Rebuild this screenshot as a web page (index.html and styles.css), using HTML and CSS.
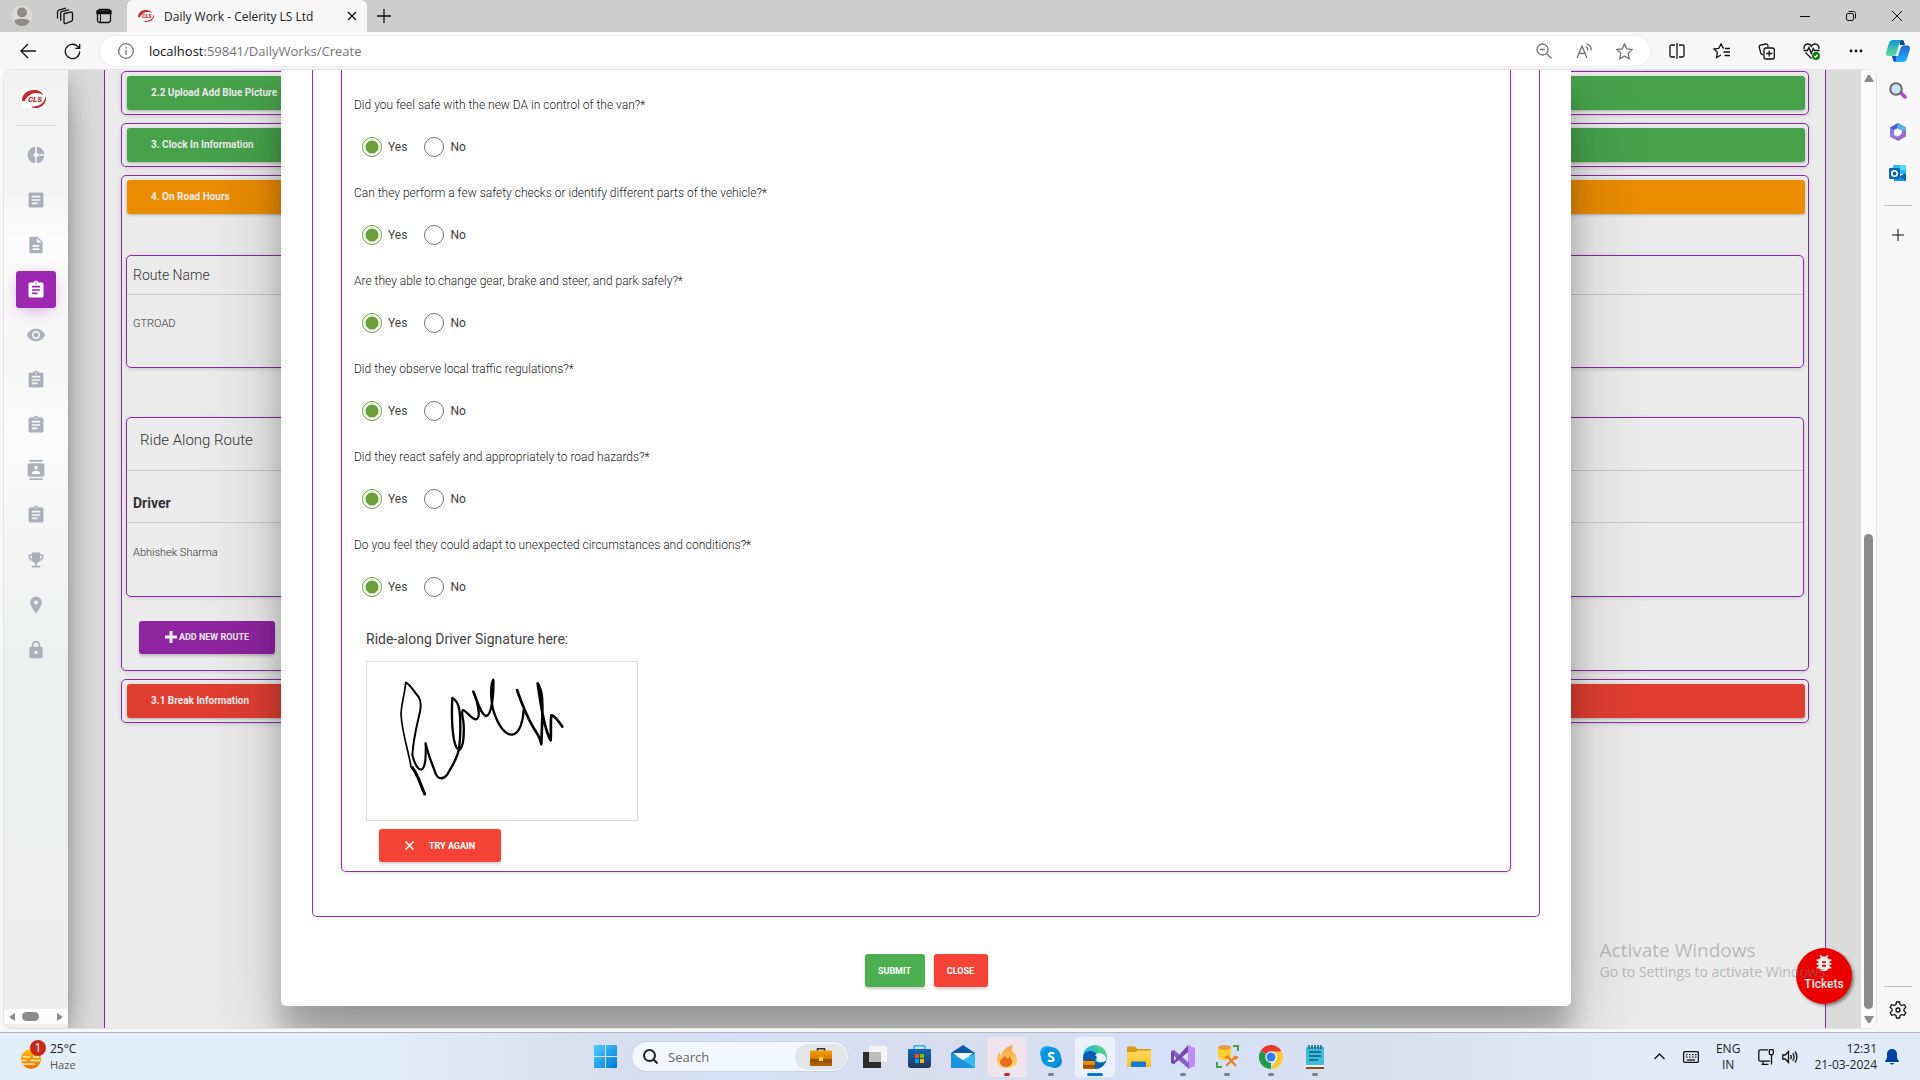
FILE: index.html
```html
<!DOCTYPE html>
<html lang="en">
<head>
<meta charset="utf-8">
<meta name="viewport" content="width=device-width, initial-scale=1">
<title>Daily Work - Celerity LS Ltd</title>
<link rel="stylesheet" href="styles.css">
</head>
<body>
<svg class="defs" aria-hidden="true">
  <defs>
    <linearGradient id="gBlue" x1="0" y1="0" x2="1" y2="1"><stop offset="0" stop-color="#4fd0ff"/><stop offset="1" stop-color="#0078d4"/></linearGradient>
    <linearGradient id="gEdge" x1="0" y1="1" x2="1" y2="0"><stop offset="0" stop-color="#0c7bd0"/><stop offset=".5" stop-color="#27b6e0"/><stop offset="1" stop-color="#6be04b"/></linearGradient>
    <linearGradient id="gCase" x1="0" y1="0" x2="0" y2="1"><stop offset="0" stop-color="#f59c0b"/><stop offset=".55" stop-color="#d67b00"/><stop offset=".56" stop-color="#8f4c00"/><stop offset="1" stop-color="#b86500"/></linearGradient>
    <linearGradient id="gFold" x1="0" y1="0" x2="0" y2="1"><stop offset="0" stop-color="#ffdc5c"/><stop offset="1" stop-color="#f9bf24"/></linearGradient>
    <linearGradient id="gStore" x1="0" y1="0" x2="0" y2="1"><stop offset="0" stop-color="#0f68b4"/><stop offset="1" stop-color="#243559"/></linearGradient>
    <linearGradient id="gFlame" x1="0" y1="0" x2="0" y2="1"><stop offset="0" stop-color="#f6a04a"/><stop offset="1" stop-color="#fbd85b"/></linearGradient>
    <linearGradient id="gSun" x1="0" y1="0" x2="0" y2="1"><stop offset="0" stop-color="#fdc000"/><stop offset="1" stop-color="#ee6c00"/></linearGradient>
    <linearGradient id="gCopA" x1="0" y1="0" x2="0" y2="1"><stop offset="0" stop-color="#1593d8"/><stop offset="1" stop-color="#5fe08f"/></linearGradient>
    <linearGradient id="gCopB" x1="0" y1="0" x2="0" y2="1"><stop offset="0" stop-color="#1f66d6"/><stop offset="1" stop-color="#20b4f5"/></linearGradient>
    <symbol id="clip" viewBox="0 0 24 24"><path d="M19 3h-4.180C14.400 1.840 13.300 1 12 1c-1.300 0-2.400.84-2.820 2H5c-1.100 0-2 .9-2 2v14c0 1.100.9 2 2 2h14c1.100 0 2-.9 2-2V5c0-1.100-.9-2-2-2zm-7 0c.55 0 1 .45 1 1s-.45 1-1 1-1-.45-1-1 .45-1 1-1zm2 14H7v-2h7v2zm3-4H7v-2h10v2zm0-4H7V7h10v2z"/></symbol>
    <symbol id="logo" viewBox="0 0 24 18"><path d="M0 11C0 4 5 0 12 0c5 0 8 2 9 5C18 3 12 2 8 5 4 8 3.500 9 3 11zM24 6c1 7-4 12-11 12-2 0-3-.5-3.500-1.500C15 17 21 14 22.500 10z" fill="#c62a2d"/><text x="6" y="12" font-family="Roboto, sans-serif" font-size="8" font-weight="900" font-style="italic" fill="#c62a2d">CLS</text></symbol>
  </defs>
</svg>

<header class="tabstrip">
  <div class="tabstrip-left">
    <svg class="avatar" width="22" height="22" viewBox="0 0 22 22"><circle cx="11" cy="11" r="10.500" fill="#dcdad7"/><circle cx="11" cy="7.500" r="5" fill="#8e8b87"/><path d="M3.500 17c0-3 3-3 7.500-3s7.500 0 7.500 3c-2 3-4.500 4-7.500 4s-5.500-1-7.500-4z" fill="#8e8b87"/></svg>
    <svg class="line" width="18" height="18" viewBox="0 0 18 18"><path d="M8.300 6.500l6.500-1.300c.9-.2 1.700.3 1.700 1.300v6.300c0 .7-.3 1.200-1 1.400l-5.800 2.300c-1 .3-1.700-.2-1.700-1.200V7.800c0-.7-.3-1.100.3-1.300zM4.700 13.800V6.200c0-1 .4-1.600 1.300-1.900l7-1.500M1.500 11.500V5c0-1 .4-1.600 1.300-1.900L10 1.200"/></svg>
    <svg class="line" width="16" height="16" viewBox="0 0 16 16"><rect x="1.500" y="1.500" width="13" height="13" rx="2.500"/><path d="M1 3h14v2.500H1z" fill="#111"/><path d="M4.500 5v9" stroke-width="1"/></svg>
  </div>
  <div class="tab">
    <svg width="16" height="12"><use href="#logo"/></svg>
    <span class="tab-title">Daily Work - Celerity LS Ltd</span>
    <button class="icon-btn" aria-label="Close tab"><svg class="line" width="10" height="10" viewBox="0 0 10 10"><path d="M1 1l8 8M9 1l-8 8"/></svg></button>
  </div>
  <button class="icon-btn new-tab" aria-label="New tab"><svg class="line" width="14" height="14" viewBox="0 0 14 14"><path d="M7 0v14M0 7h14"/></svg></button>
  <div class="win-btns">
    <button class="icon-btn" aria-label="Minimize"><svg class="line thin" width="10" height="10" viewBox="0 0 10 10"><path d="M0 5.500h10"/></svg></button>
    <button class="icon-btn" aria-label="Restore"><svg class="line thin" width="10" height="10" viewBox="0 0 10 10"><rect x=".5" y="2.500" width="7" height="7" rx="1.500"/><path d="M2.500.5h5c1.200 0 2 .8 2 2v5"/></svg></button>
    <button class="icon-btn" aria-label="Close window"><svg class="line thin" width="10" height="10" viewBox="0 0 10 10"><path d="M0 0l10 10M10 0L0 10"/></svg></button>
  </div>
</header>

<nav class="toolbar">
  <div class="nav-btns">
    <button class="icon-btn" aria-label="Back"><svg class="line" width="16" height="16" viewBox="0 0 16 16"><path d="M16 8H1M8 1L1 8l7 7"/></svg></button>
    <button class="icon-btn" aria-label="Refresh"><svg class="line" width="17" height="17" viewBox="0 0 17 17"><path d="M15.700 8.500a7.200 7.200 0 1 1-2.200-5.200L15.500 5.200M15.700 1v4.400h-4.400"/></svg></button>
  </div>
  <div class="address">
    <svg class="line gray" width="16" height="16" viewBox="0 0 16 16"><circle cx="8" cy="8" r="7.300"/><path d="M8 7v5M8 4v1.500"/></svg>
    <span class="url"><b>localhost</b>:59841/DailyWorks/Create</span>
    <div class="address-tools">
      <svg class="line gray" width="16" height="16" viewBox="0 0 16 16"><circle cx="6.500" cy="6.500" r="5.500"/><path d="M10.500 10.500l5 5M4 6.500h5"/></svg>
      <svg class="line gray" width="16" height="16" viewBox="0 0 16 16"><path d="M1 15L6 3l5 12M3 10.500h6M9.500 3.500c1.500.6 2.300 2 2.300 4M10.500.8c3 .8 4.800 3.200 4.800 6.500"/></svg>
      <svg class="line gray" width="17" height="17" viewBox="0 0 17 17"><path d="M8.500 1l2.300 4.900 5.200.7-3.800 3.700.9 5.400-4.600-2.600-4.600 2.600.9-5.400L1 6.600l5.200-.7z"/></svg>
    </div>
  </div>
  <div class="toolbar-tools">
    <svg class="line" width="16" height="16" viewBox="0 0 16 16"><path d="M8 0v16M6 2H2.500C1.500 2 1 2.500 1 3.500v9c0 1 .5 1.500 1.500 1.500H6M10 2h3.500c1 0 1.500.5 1.500 1.500v9c0 1-.5 1.500-1.500 1.500H10"/></svg>
    <svg class="line" width="17" height="16" viewBox="0 0 17 16"><path d="M11 5l-1-.1L8 1 5.700 5.300 1 6l3.400 3.400-.8 5.100L8 12M12 5.500h5M10.500 9h6.500M11.500 12.500H17"/></svg>
    <svg class="line" width="17" height="17" viewBox="0 0 17 17"><rect x="6" y="5" width="10.300" height="11" rx="2"/><path d="M11.200 7.500v6M8.200 10.500h6M5 11.500c-1.300.2-2-.3-2.200-1.300L1.300 4.500C1 3.300 1.500 2.500 2.600 2.200L7.500 1c1.200-.3 2 .1 2.300 1.200L10.200 4"/></svg>
    <svg class="line" width="17" height="17" viewBox="0 0 17 17"><path d="M.5 7.500h4l1.500-3 2.200 6 2-5 1.200 2h5M1.200 6C.5 3 2.500 1 4.500 1 6.500 1 8 2.500 8.300 3.300 8.700 2.500 10 1 12 1c2.500 0 4.500 2 3.800 5M2.500 9.500l6 6"/><circle cx="13" cy="13" r="4" fill="#107c10" stroke="none"/><path d="M11.300 13l1.200 1.200 2.200-2.400" stroke="#fff"/></svg>
    <svg width="16" height="16" viewBox="0 0 16 16" fill="#111"><circle cx="3" cy="8" r="1.400"/><circle cx="8" cy="8" r="1.400"/><circle cx="13" cy="8" r="1.400"/></svg>
  </div>
  <button class="icon-btn copilot" aria-label="Copilot"><svg width="24" height="23" viewBox="0 0 24 23"><path d="M13 0h3c2 0 2 1.500 3 5h-5z" fill="#0c4a80"/><path d="M7 0h8.500c-1 1-2 3-3.500 8.500S9.500 16 7 16H2.500C.5 16-.5 14 .3 11.500l2.500-8C3.500 1 5 0 7 0z" fill="url(#gCopA)"/><path d="M17 22H8.500c1-1 2-2.500 3.500-8s2.500-8.500 5-8.500h4.500c2 0 3 2 2.200 4.500l-2.500 8C20.500 21 19 22 17 22z" fill="url(#gCopB)"/><path d="M9 22c-1.500 0-2-2-3-6h2c2 0 3-2 4-4-1.500 6-2 9-3 10z" fill="#1647d8"/><path d="M13.500 6h3c-2 1-3 5-4.500 10H9c2-1 3-5 4.500-10z" fill="#f7f7f7"/></svg></button>
</nav>

<div class="workspace">
  <div class="viewport">
    <aside class="side">
      <a class="side-logo" href="#" aria-label="CLS"><svg width="24" height="18"><use href="#logo"/></svg></a>
      <nav class="side-nav">
        <a href="#" aria-label="Dashboard"><svg viewBox="0 0 24 24"><path d="M11 9.160V2c-5 .5-9 4.790-9 10s4 9.500 9 10v-7.160c-1-.41-2-1.520-2-2.840s1-2.430 2-2.840zM14.860 11H22c-.48-4.750-4-8.530-9-9v7.160c1 .3 1.520.98 1.860 1.840zM13 14.840V22c5-.47 8.520-4.250 9-9h-7.140c-.34.86-.86 1.540-1.860 1.840z"/></svg></a>
        <a href="#" aria-label="Articles"><svg viewBox="0 0 24 24"><path d="M19 3H5c-1.100 0-2 .9-2 2v14c0 1.100.9 2 2 2h14c1.100 0 2-.9 2-2V5c0-1.100-.9-2-2-2zm-5 14H7v-2h7v2zm3-4H7v-2h10v2zm0-4H7V7h10v2z"/></svg></a>
        <a href="#" aria-label="Documents"><svg viewBox="0 0 24 24"><path d="M14 2H6c-1.100 0-2 .9-2 2v16c0 1.100.9 2 2 2h12c1.100 0 2-.9 2-2V8l-6-6zm2 16H8v-2h8v2zm0-4H8v-2h8v2zm-3-5V3.500L18.500 9H13z"/></svg></a>
        <a href="#" class="active" aria-label="Daily work"><svg><use href="#clip"/></svg></a>
        <a href="#" aria-label="View"><svg viewBox="0 0 24 24"><path d="M12 4.500C7 4.500 2.730 7.610 1 12c1.730 4.390 6 7.500 11 7.500s9.270-3.110 11-7.500c-1.730-4.390-6-7.500-11-7.500zM12 17c-2.760 0-5-2.240-5-5s2.240-5 5-5 5 2.240 5 5-2.240 5-5 5zm0-8c-1.660 0-3 1.340-3 3s1.340 3 3 3 3-1.340 3-3-1.340-3-3-3z"/></svg></a>
        <a href="#" aria-label="Tasks"><svg><use href="#clip"/></svg></a>
        <a href="#" aria-label="Reports"><svg><use href="#clip"/></svg></a>
        <a href="#" aria-label="Contacts"><svg viewBox="0 0 24 24"><path d="M20 0H4v2h16V0zM4 24h16v-2H4v2zM20 4H4c-1.100 0-2 .9-2 2v12c0 1.100.9 2 2 2h16c1.100 0 2-.9 2-2V6c0-1.100-.9-2-2-2zm-8 2.750c1.240 0 2.250 1.010 2.250 2.250s-1.010 2.250-2.250 2.250S9.750 10.240 9.750 9 10.760 6.750 12 6.750zM17 17H7v-1.500c0-1.670 3.330-2.500 5-2.500s5 .83 5 2.500V17z"/></svg></a>
        <a href="#" aria-label="Assignments"><svg><use href="#clip"/></svg></a>
        <a href="#" aria-label="Awards"><svg viewBox="0 0 24 24"><path d="M19 5h-2V3H7v2H5c-1.100 0-2 .9-2 2v1c0 2.550 1.920 4.630 4.390 4.940.63 1.500 1.980 2.630 3.610 2.960V19H7v2h10v-2h-4v-3.100c1.630-.33 2.980-1.460 3.610-2.960C19.080 12.630 21 10.550 21 8V7c0-1.100-.9-2-2-2zM5 8V7h2v3.820C5.840 10.400 5 9.300 5 8zm14 0c0 1.300-.84 2.400-2 2.820V7h2v1z"/></svg></a>
        <a href="#" aria-label="Places"><svg viewBox="0 0 24 24"><path d="M12 2C8.130 2 5 5.130 5 9c0 5.250 7 13 7 13s7-7.750 7-13c0-3.870-3.130-7-7-7zm0 9.500c-1.380 0-2.500-1.120-2.500-2.500s1.120-2.500 2.500-2.500 2.500 1.120 2.500 2.500-1.120 2.500-2.500 2.500z"/></svg></a>
        <a href="#" aria-label="Security"><svg viewBox="0 0 24 24"><path d="M18 8h-1V6c0-2.760-2.240-5-5-5S7 3.240 7 6v2H6c-1.100 0-2 .9-2 2v10c0 1.100.9 2 2 2h12c1.100 0 2-.9 2-2V10c0-1.100-.9-2-2-2zm-6 9c-1.100 0-2-.9-2-2s.9-2 2-2 2 .9 2 2-.9 2-2 2zm3.100-9H8.900V6c0-1.710 1.390-3.100 3.100-3.100s3.100 1.390 3.100 3.100v2z"/></svg></a>
      </nav>
      <div class="hscroll">
        <svg width="6" height="8" viewBox="0 0 6 8"><path d="M6 0v8L0 4z"/></svg>
        <span class="hthumb"></span>
        <svg width="6" height="8" viewBox="0 0 6 8"><path d="M0 0v8l6-4z"/></svg>
      </div>
    </aside>

    <main class="page">
      <div class="outer-card">
        <section class="panel"><h2 class="bar green">2.2 Upload Add Blue Picture</h2></section>
        <section class="panel"><h2 class="bar green">3. Clock In Information</h2></section>
        <section class="panel">
          <h2 class="bar orange">4. On Road Hours</h2>
          <div class="table-card first">
            <table>
              <thead><tr><th>Route Name</th></tr></thead>
              <tbody><tr><td>GTROAD</td></tr></tbody>
            </table>
          </div>
          <div class="table-card second">
            <table>
              <caption>Ride Along Route</caption>
              <thead><tr><th class="strong">Driver</th></tr></thead>
              <tbody><tr><td>Abhishek Sharma</td></tr></tbody>
            </table>
          </div>
          <button class="btn purple"><svg width="12" height="12" viewBox="0 0 12 12"><path d="M4.500 0h3v4.500H12v3H7.500V12h-3V7.500H0v-3h4.500z"/></svg>ADD NEW ROUTE</button>
        </section>
        <section class="panel"><h2 class="bar red">3.1 Break Information</h2></section>
      </div>

      <div class="modal-layer">
        <form class="modal" role="dialog" aria-label="Ride along">
          <div class="modal-outer">
            <div class="modal-inner">
              <fieldset class="question"><legend>Did you feel safe with the new DA in control of the van?*</legend>
                <div class="choices"><label><input type="radio" name="q1" checked>Yes</label><label><input type="radio" name="q1">No</label></div></fieldset>
              <fieldset class="question"><legend>Can they perform a few safety checks or identify different parts of the vehicle?*</legend>
                <div class="choices"><label><input type="radio" name="q2" checked>Yes</label><label><input type="radio" name="q2">No</label></div></fieldset>
              <fieldset class="question"><legend>Are they able to change gear, brake and steer, and park safely?*</legend>
                <div class="choices"><label><input type="radio" name="q3" checked>Yes</label><label><input type="radio" name="q3">No</label></div></fieldset>
              <fieldset class="question"><legend>Did they observe local traffic regulations?*</legend>
                <div class="choices"><label><input type="radio" name="q4" checked>Yes</label><label><input type="radio" name="q4">No</label></div></fieldset>
              <fieldset class="question"><legend>Did they react safely and appropriately to road hazards?*</legend>
                <div class="choices"><label><input type="radio" name="q5" checked>Yes</label><label><input type="radio" name="q5">No</label></div></fieldset>
              <fieldset class="question"><legend>Do you feel they could adapt to unexpected circumstances and conditions?*</legend>
                <div class="choices"><label><input type="radio" name="q6" checked>Yes</label><label><input type="radio" name="q6">No</label></div></fieldset>
              <div class="signature">
                <p>Ride-along Driver Signature here:</p>
                <svg class="pad" viewBox="81 306 810 474" role="img" aria-label="Signature">
                  <path stroke-width="5" d="M213 620C205 570 186 520 183 462C185 425 195 400 197 368"/>
                  <path stroke-width="6" d="M198 368C208 370 215 385 236 411C242 420 243 440 240 455C232 490 220 535 217 585C222 605 232 628 243 629C260 625 257 580 257 550"/>
                  <path stroke-width="7" d="M257 551C266 590 280 620 287 641C295 660 312 658 322 643C340 612 352 595 356 570C363 530 362 470 357 445C353 425 345 418 337 414C335 450 335 500 342 540C346 560 354 572 358 570C372 560 372 520 371 495C370 475 362 455 369 450C382 455 396 479 408 478C425 475 412 420 400 395"/>
                  <path stroke-width="7" d="M400 395C415 430 423 465 439 468C455 465 462 400 460 359C450 375 452 430 463 460C475 495 495 526 517 524C540 520 550 480 551 450"/>
                  <path stroke-width="8" d="M531 390C545 430 560 470 580 502C590 520 600 530 604 553C605 500 612 430 603 395C600 380 596 375 593 370C600 420 608 475 621 515C625 525 627 535 632 541C634 510 631 485 634 466C645 465 655 485 667 500"/>
                  <path stroke-width="9" d="M216 622C232 640 238 665 254 702"/>
                </svg>
                <button type="button" class="btn danger try"><svg class="x" width="9" height="9" viewBox="0 0 9 9"><path d="M.5.5l8 8M8.500.5l-8 8"/></svg>TRY AGAIN</button>
              </div>
            </div>
          </div>
          <div class="modal-actions">
            <button type="button" class="btn success">SUBMIT</button>
            <button type="button" class="btn danger">CLOSE</button>
          </div>
        </form>
      </div>

      <a class="tickets" href="#"><svg width="22" height="22" viewBox="0 0 24 24"><path d="M20 8h-2.810c-.45-.78-1.070-1.450-1.820-1.960L17 4.410 15.590 3l-2.170 2.170C12.960 5.060 12.490 5 12 5c-.49 0-.96.06-1.410.17L8.410 3 7 4.410l1.620 1.630C7.880 6.550 7.260 7.220 6.810 8H4v2h2.090c-.05.33-.09.66-.09 1v1H4v2h2v1c0 .34.04.67.09 1H4v2h2.810c1.040 1.790 2.970 3 5.190 3s4.150-1.210 5.190-3H20v-2h-2.090c.05-.33.09-.66.09-1v-1h2v-2h-2v-1c0-.34-.04-.67-.09-1H20V8zm-6 8h-4v-2h4v2zm0-4h-4v-2h4v2z"/></svg>Tickets</a>
      <div class="watermark"><p class="wm-title">Activate Windows</p><p class="wm-text">Go to Settings to activate Windows.</p></div>
    </main>

    <div class="vscroll">
      <svg width="10" height="7" viewBox="0 0 10 7"><path d="M0 7L4 0h2l4 7z"/></svg>
      <div class="vtrack"><span class="vthumb"></span></div>
      <svg width="10" height="7" viewBox="0 0 10 7"><path d="M0 0h10L6 7H4z"/></svg>
    </div>
  </div>

  <aside class="edge-side">
    <svg width="18" height="18" viewBox="0 0 18 18"><path d="M12 11l4 4" stroke="#c23be0" stroke-width="3.500" stroke-linecap="round"/><circle cx="7" cy="7" r="5.800" fill="#c5e6f8" stroke="#666" stroke-width="2"/></svg>
    <svg width="18" height="18" viewBox="0 0 18 18"><path d="M9 0l8 4.500v4L12 7 9 5 5 7v5L1 14V4.500z" fill="#4a5fd0"/><path d="M9 0l8 4.500V10l-5-3-4-2z" fill="#52b3ea"/><path d="M17 8v5.500L9 18l-5-3 6-2 3-3V7z" fill="#9a6ac8"/><path d="M1 4.500L5 7v5l4 2-4 2-4-2.500z" fill="#8b7bdc"/><circle cx="9" cy="9.500" r="3" fill="#fff"/></svg>
    <svg width="18" height="18" viewBox="0 0 18 18"><path d="M4 1h13v9H4z" fill="#35b8f1"/><path d="M11 1h6v5h-6z" fill="#50d9ff"/><path d="M5 9l7 3 5-3v8H5z" fill="#1590df"/><path d="M17 9v8l-6-5z" fill="#0f5fae"/><rect y="4" width="11" height="11" rx="1" fill="#0a64b8"/><circle cx="5.500" cy="9.500" r="2.700" fill="none" stroke="#fff" stroke-width="1.600"/></svg>
    <hr>
    <svg class="line thin" width="12" height="12" viewBox="0 0 12 12"><path d="M6 0v12M0 6h12"/></svg>
    <hr class="push">
    <svg class="line" width="18" height="18" viewBox="0 0 18 18"><circle cx="9" cy="9" r="2"/><path d="M7.500 1h3l.6 2.500 1.700 1 2.500-.8 1.500 2.600L15 8.100v1.800l1.800 1.800-1.500 2.600-2.500-.8-1.700 1-.6 2.500h-3l-.6-2.500-1.700-1-2.500.8-1.500-2.600L3 9.900V8.100L1.200 6.300l1.500-2.600 2.500.8 1.700-1z" stroke-linejoin="round"/></svg>
  </aside>
</div>

<footer class="taskbar">
  <div class="weather">
    <span class="sun"><svg width="22" height="20" viewBox="0 0 22 20"><circle cx="12" cy="10" r="10" fill="url(#gSun)"/><path d="M4 8h7M14 8h6M0 11.500h8M11 11.500h10M2 15h14" stroke="#ffe9b8" stroke-width="1.500"/></svg><span class="badge">1</span></span>
    <span class="weather-text">25°C<small>Haze</small></span>
  </div>
  <div class="apps">
    <button class="app" aria-label="Start"><svg width="23" height="23" viewBox="0 0 23 23" fill="url(#gBlue)"><path d="M0 1c0-.6.400-1 1-1h10v11H0zM12 0h10c.6 0 1 .4 1 1v10H12zM0 12h11v11H1c-.6 0-1-.4-1-1zM12 12h11v10c0 .6-.4 1-1 1H12z"/></svg></button>
    <div class="search">
      <svg width="15" height="15" viewBox="0 0 15 15" fill="none" stroke="#222" stroke-width="2"><circle cx="6.500" cy="6.500" r="5.500"/><path d="M10.500 10.500l4 4"/></svg>
      <input type="text" placeholder="Search" aria-label="Search">
      <span class="case"><svg width="22" height="18" viewBox="0 0 22 18"><path d="M7.500 3V1.500c0-.6.4-1 1-1h5c.6 0 1 .4 1 1V3" fill="none" stroke="#333" stroke-width="1.800"/><rect y="2.500" width="22" height="15.500" rx="1" fill="url(#gCase)"/><rect x="9" y="9" width="4" height="4" fill="#ffd92e"/></svg></span>
    </div>
    <button class="app" aria-label="Task view"><svg width="24" height="22" viewBox="0 0 24 22"><rect y="6" width="18" height="16" fill="#2b2b2b"/><rect x="6" width="18" height="16" fill="#f4f4f4"/><rect x="6" y="6" width="12" height="10" fill="#bdbdbd"/></svg></button>
    <button class="app" aria-label="Store"><svg width="23" height="23" viewBox="0 0 23 23"><path d="M6 5V2c0-.8.5-1.300 1.300-1.300h8.400c.8 0 1.300.5 1.300 1.300v3" fill="none" stroke="#23b4f2" stroke-width="1.600"/><path d="M0 4h23v16c0 2-1 3-3 3H3c-2 0-3-1-3-3z" fill="url(#gStore)"/><path d="M7 9h4v4H7z" fill="#f25022"/><path d="M12 9h4v4h-4z" fill="#7fba00"/><path d="M7 14h4v4H7z" fill="#00a4ef"/><path d="M12 14h4v4h-4z" fill="#ffb900"/></svg></button>
    <button class="app" aria-label="Mail"><svg width="24" height="23" viewBox="0 0 24 23"><path d="M0 8l12-8 12 8v3H0z" fill="#0a5aa8"/><path d="M2 8h20l-10 8z" fill="#f3f6fa"/><path d="M0 8l12 7 12-7v15H0z" fill="#35b9f1"/><path d="M0 8l24 15H0z" fill="#1b93e0"/></svg></button>
    <button class="app alert" aria-label="Torch"><svg width="20" height="24" viewBox="0 0 20 24"><path d="M16 0c-2 4-1 6 1 8 2 2 3 4 3 7 0 5-4 8-10 8S0 20 0 14c0-3 1-5 3-7 0 2 0 3 1 4C5 6 10 1 16 0z" fill="url(#gFlame)"/><path d="M8 10c0 2 2 3 3 4 1-1 1-2 1-3 2 2 3 4 3 6 0 3-3 5-6 5s-6-2-6-5c0-3 4-4 5-7z" fill="#e96a1c"/></svg></button>
    <button class="app run" aria-label="Skype"><svg width="22" height="22" viewBox="0 0 22 22"><circle cx="7" cy="7" r="7" fill="#1aa5e8"/><circle cx="15" cy="15" r="7" fill="#0d86d6"/><circle cx="11" cy="11" r="10" fill="#0a97e0"/><text x="11" y="16" text-anchor="middle" font-family="Open Sans, sans-serif" font-size="14" font-weight="700" fill="#fff">S</text></svg></button>
    <button class="app current" aria-label="Edge"><svg width="24" height="24" viewBox="0 0 24 24"><circle cx="12" cy="12" r="12" fill="url(#gEdge)"/><path d="M0 13C1 6 7 5 11 7c4 2 3 6 1 8 2 4 8 3 11 1-2 5-6 8-11 8S0 20 0 13z" fill="#0d5cae"/><path d="M12 11c2 0 3 2 1 4 2 3 7 3 10 0 1-3-2-6-6-7-3 0-4 1-5 3z" fill="#edf3fa"/><rect y="16" width="12" height="8" rx="1" fill="url(#gCase)"/><path d="M4 16v-1h4v1" fill="none" stroke="#5a3500"/></svg></button>
    <button class="app" aria-label="Files"><svg width="24" height="22" viewBox="0 0 24 22"><path d="M0 2c0-1 .5-1.500 1.500-1.500H8l2 2.500h13c.6 0 1 .4 1 1v6H0z" fill="#d89a10"/><path d="M0 6h9l2-1.500h13V21H0z" fill="url(#gFold)"/><path d="M4 21v-4c0-1 .5-1.500 1.500-1.500h12c1 0 1.500.5 1.500 1.500v4z" fill="#1a79cf"/></svg></button>
    <button class="app run" aria-label="Visual Studio"><svg width="24" height="24" viewBox="0 0 24 24"><path d="M17 0l7 3v18l-7 3z" fill="#c08cf5"/><path d="M0 6l3-1 15 13v6L3 11v8l-3-1z" fill="#8a5bc8"/><path d="M0 18V6l3 2v8l14-16v7L3 19z" fill="#7348ae"/></svg></button>
    <button class="app run" aria-label="SQL Server"><svg width="23" height="23" viewBox="0 0 23 23"><path d="M2 2h13v10c0 2-2 3-6 3s-7-1-7-3z" fill="#fbd02e"/><ellipse cx="8.500" cy="2.500" rx="6.500" ry="2.500" fill="#eb9a45"/><path d="M17 1h5v5M1 17v5h5" fill="none" stroke="#3fa34a" stroke-width="2"/><path d="M11 11l9 10M20 11l-10 10M9 13l4-2M18 14l4-2" stroke="#ee7a1c" stroke-width="2"/></svg></button>
    <button class="app run" aria-label="Chrome"><svg width="24" height="24" viewBox="0 0 24 24"><path d="M12 12L1.600 6A12 12 0 0 1 22.400 6z" fill="#e33b2e"/><path d="M12 12v12A12 12 0 0 1 1.600 6z" fill="#1e9b4b"/><path d="M12 6.500h10.600c1 2 1.400 3.500 1.400 5.500a12 12 0 0 1-12 12l5-9z" fill="#fcc934"/><circle cx="12" cy="12" r="5.700" fill="#fff"/><circle cx="12" cy="12" r="4.500" fill="#2d7df0"/></svg></button>
    <button class="app run" aria-label="Notepad"><svg width="18" height="24" viewBox="0 0 18 24"><path d="M0 2h18v20H0z" fill="#41bcd8"/><path d="M0 20h18v2H0z" fill="#f1f1f1"/><path d="M0 22h18v2H0z" fill="#8a4a1c"/><path d="M3 7h12M3 11h12M3 15h9" stroke="#0b5c78" stroke-width="1.600"/><path d="M3 0v4M6 0v4M9 0v4M12 0v4M15 0v4" stroke="#0b5c78" stroke-width="1.500"/></svg></button>
  </div>
  <div class="tray">
    <svg class="line chev" width="11" height="7" viewBox="0 0 11 7"><path d="M.5 6l5-5 5 5"/></svg>
    <svg class="line kb" width="16" height="12" viewBox="0 0 16 12"><rect x=".6" y=".6" width="14.800" height="10.800" rx="1.500"/><path d="M3 3.700h10.500M3 6.200h10.500" stroke-dasharray="1.500 1.500"/><path d="M4 9h8"/></svg>
    <span class="lang">ENG<br>IN</span>
    <svg class="line" width="16" height="16" viewBox="0 0 16 16"><path d="M10 .8H2.500c-1 0-1.700.6-1.700 1.700v8c0 1 .6 1.700 1.700 1.700h9.500M5 12v3.200M3.500 15.300h7M13.500 6v9.500"/><rect x="11.300" y=".6" width="4" height="5" rx="1"/></svg>
    <svg class="line" width="16" height="14" viewBox="0 0 16 14"><path d="M.8 5h2.400L6.500 1.500v11L3.200 9H.8zM8.500 5c.8 1 .8 3 0 4M10.700 3.300c1.800 2 1.800 5.400 0 7.400M13 1.500c2.500 3 2.500 8 0 11"/></svg>
    <span class="clock">12:31<br>21-03-2024</span>
    <svg width="14" height="16" viewBox="0 0 14 16" fill="#00439c"><path d="M7 0c3 0 5 2.200 5 5v4l2 3.500v.5H0v-.5L2 9V5c0-2.800 2-5 5-5zM5 14h4c-.3 1-1 1.500-2 1.500S5.300 15 5 14z"/></svg>
  </div>
</footer>
</body>
</html>
```
FILE: styles.css
```css
* { box-sizing: border-box; }

body {
  margin: 0;
  height: 100vh;
  display: flex;
  flex-direction: column;
  overflow: hidden;
  background: #f7f7f7;
  color: #333;
  font-family: Roboto, sans-serif;
  font-size: 12px;
}

p, h2 { margin: 0; }
a { color: inherit; text-decoration: none; }
svg { display: block; flex: none; }
button { font-family: inherit; cursor: pointer; }
.defs { position: absolute; width: 0; height: 0; }

.line { fill: none; stroke: #111; stroke-width: 1.3; }
.thin { stroke-width: 1; }
.gray { stroke: #757575; }

.icon-btn {
  display: flex;
  align-items: center;
  justify-content: center;
  padding: 0;
  border: 0;
  background: none;
}

/* Browser tab strip */
.tabstrip {
  display: flex;
  align-items: center;
  height: 32px;
  flex: none;
  background: #cdcdcd;
  font-family: "Open Sans", "Noto Sans", sans-serif;
}
.tabstrip-left {
  display: flex;
  align-items: center;
  justify-content: space-between;
  width: 127px;
  padding: 0 15px 0 11px;
}
.tab {
  display: flex;
  align-items: center;
  gap: 10px;
  width: 240px;
  height: 32px;
  padding: 0 10px 0 11px;
  border-radius: 6px 6px 0 0;
  background: #f7f7f7;
}
.tab-title { flex: 1; color: #222; white-space: nowrap; }
.new-tab { width: 34px; }
.win-btns { display: flex; margin-left: auto; }
.win-btns .icon-btn { width: 46px; height: 32px; }

/* Browser toolbar */
.toolbar {
  display: flex;
  align-items: center;
  height: 38px;
  flex: none;
  background: #f7f7f7;
}
.nav-btns { display: flex; width: 100px; padding-left: 6px; }
.nav-btns .icon-btn { width: 44px; height: 32px; }
.address {
  flex: 1;
  display: flex;
  align-items: center;
  gap: 15px;
  height: 30px;
  padding: 0 17px 0 18px;
  border-radius: 15px;
  background: #fff;
  box-shadow: 0 0 2px rgba(0, 0, 0, .12);
  font-family: "Open Sans", "Noto Sans", sans-serif;
  font-size: 13px;
}
.url { flex: 1; color: #757575; }
.url b { color: #111; font-weight: 400; }
.address-tools { display: flex; align-items: center; gap: 24px; }
.toolbar-tools { display: flex; align-items: center; gap: 28px; padding: 0 12px 0 19px; }
.copilot { width: 44px; height: 32px; }

/* Area below the toolbar */
.workspace { flex: 1; display: flex; min-height: 0; padding-bottom: 4px; }
.viewport {
  flex: 1;
  display: flex;
  min-width: 0;
  margin-left: 4px;
  border-radius: 8px;
  overflow: hidden;
  box-shadow: 0 0 0 1px #e2e2e2;
}

/* Application side navigation */
.side {
  position: relative;
  z-index: 2;
  display: flex;
  flex-direction: column;
  align-items: center;
  width: 64px;
  flex: none;
  padding: 20px 0 4px;
  background: linear-gradient(#f2f2f2, #f4f4f4 12%, #fcfcfc 18%, #f6f6f6 30%, #fbfbfb 38%, #f4f4f4 50%, #eef0ef 62%, #eee 100%);
  box-shadow: 0 16px 38px -12px rgba(0, 0, 0, .56), 0 4px 25px 0 rgba(0, 0, 0, .12), 0 8px 10px -5px rgba(0, 0, 0, .2);
}
.side-logo {
  width: 40px;
  height: 36px;
  padding: 0 10px 0 6px;
  border-bottom: 1px solid #dcdcdc;
}
.side-logo svg { background: #fff; }
.side-nav { display: flex; flex-direction: column; gap: 8px; margin-top: 10px; }
.side-nav a {
  display: flex;
  align-items: center;
  justify-content: center;
  width: 40px;
  height: 37px;
  border-radius: 3px;
}
.side-nav svg { width: 20px; height: 20px; fill: #a9afbb; }
.side-nav .active {
  background: #9c27b0;
  box-shadow: 0 4px 16px -4px rgba(156, 39, 176, .5);
}
.side-nav .active svg { fill: #fff; }
.hscroll {
  display: flex;
  align-items: center;
  gap: 7px;
  width: 64px;
  height: 15px;
  margin-top: auto;
  padding: 0 5px;
  background: #fcfcfc;
  fill: #8b8b8b;
}
.hthumb { width: 17px; height: 9px; margin-right: auto; border-radius: 5px; background: #8b8b8b; }

/* Page behind the dialog */
.page {
  position: relative;
  flex: 1;
  min-width: 0;
  padding: 0 35px 0 36px;
  background: #dadada;
  overflow: hidden;
}
.outer-card {
  display: flex;
  flex-direction: column;
  gap: 8px;
  height: 100%;
  padding: 1px 16px;
  border: solid #8e24aa;
  border-width: 0 1px;
  background: #ebebeb;
}
.panel {
  padding: 4px 3px 4px 5px;
  border: 1px solid #8e24aa;
  border-radius: 5px;
  box-shadow: 0 1px 4px rgba(0, 0, 0, .14);
}
.bar {
  height: 34px;
  padding-left: 24px;
  border-radius: 3px;
  color: #ebebeb;
  font-size: 10px;
  font-weight: 700;
  line-height: 34px;
  box-shadow: 0 1px 3px rgba(0, 0, 0, .25);
}
.green { background: #47a14b; }
.orange { background: #eb8c00; }
.red { background: #e03e31; }

.table-card {
  margin: 0 1px 0 -1px;
  border: 1px solid #8e24aa;
  border-radius: 5px;
  box-shadow: 0 1px 4px rgba(0, 0, 0, .14);
}
.first { margin-top: 41px; }
.second { margin-top: 49px; }
table { width: 100%; border-collapse: collapse; text-align: left; }
caption {
  height: 52px;
  padding: 9px 13px;
  font-size: 15px;
  font-weight: 300;
  line-height: 26px;
  text-align: left;
}
th {
  height: 38px;
  padding: 0 6px;
  border-bottom: 1px solid #c8c8c8;
  font-size: 14px;
  font-weight: 300;
}
th.strong {
  height: 52px;
  padding-top: 12px;
  border-top: 1px solid #c8c8c8;
  font-weight: 700;
}
td { height: 73px; padding: 0 6px 14px; font-size: 11px; font-weight: 300; }

.btn {
  display: flex;
  align-items: center;
  justify-content: center;
  height: 33px;
  padding: 0 12px;
  border: 0;
  border-radius: 3px;
  color: #fff;
  font-size: 9px;
  font-weight: 700;
  white-space: nowrap;
  box-shadow: 0 2px 3px rgba(0, 0, 0, .2);
}
.btn svg { fill: currentColor; }
.purple { gap: 2px; width: 136px; margin: 24px 0 12px 12px; background: #8e24a0; color: #ebebeb; }
.success { width: 60px; background: #4caf50; }
.danger { width: 54px; background: #f44336; }

/* Dialog */
.modal-layer {
  position: absolute;
  inset: 0;
  padding: 0 290px 0 213px;
}
.modal {
  padding: 0 31px 19px;
  border-radius: 0 0 5px 5px;
  background: #fff;
  box-shadow: 0 27px 24px 0 rgba(0, 0, 0, .2), 0 40px 77px 0 rgba(0, 0, 0, .22);
}
.modal-outer {
  padding: 0 28px 44px;
  border: 1px solid #9c27b0;
  border-top: 0;
  border-radius: 0 0 5px 5px;
}
.modal-inner {
  padding: 27px 12px 9px;
  border: 1px solid #9c27b0;
  border-top: 0;
  border-radius: 0 0 5px 5px;
  box-shadow: 0 1px 4px rgba(0, 0, 0, .14);
}
.question { height: 88px; margin: 0; padding: 0; border: 0; }
.question legend { padding: 0; color: #222; font-size: 12px; font-weight: 300; line-height: 16px; }
.choices { display: flex; gap: 17px; padding: 24px 8px 0; }
.choices label { display: flex; align-items: center; gap: 6px; height: 20px; color: #444; }
.choices input {
  appearance: none;
  width: 20px;
  height: 20px;
  margin: 0;
  border: 1px solid #757575;
  border-radius: 50%;
}
.choices input:checked {
  border-color: #689f38;
  background: radial-gradient(circle, #689f38 6px, transparent 7px);
}
.signature { padding: 4px 12px 0; }
.signature p { padding-bottom: 12px; color: #444; font-size: 14px; line-height: 20px; }
.pad {
  width: 272px;
  height: 160px;
  border: 1px solid #ddd;
  fill: none;
  stroke: #000;
  stroke-linecap: round;
  stroke-linejoin: round;
}
.try { gap: 15px; width: 122px; margin: 8px 0 0 13px; }
.try .x { fill: none; stroke: #fff; stroke-width: 1.5; }
.modal-actions { display: flex; justify-content: center; gap: 9px; padding-top: 37px; }

.tickets {
  position: absolute;
  right: 9px;
  bottom: 24px;
  display: flex;
  flex-direction: column;
  align-items: center;
  width: 56px;
  height: 56px;
  padding-top: 4px;
  border-radius: 50%;
  background: #eb0000;
  box-shadow: 2px 2px 3px rgba(0, 0, 0, .4);
  color: #ebebeb;
  font-size: 12px;
  font-weight: 500;
  line-height: 20px;
  fill: #ebebeb;
}
.watermark {
  position: absolute;
  right: 32px;
  bottom: 46px;
  color: rgba(130, 130, 130, .5);
  font-family: "Open Sans", "Noto Sans", sans-serif;
}
.wm-title { font-size: 19px; line-height: 24px; }
.wm-text { font-size: 14px; line-height: 20px; }

.vscroll {
  display: flex;
  flex-direction: column;
  align-items: center;
  gap: 4px;
  width: 15px;
  flex: none;
  padding: 5px 0;
  background: #fcfcfc;
  fill: #8b8b8b;
}
.vtrack { flex: 1; display: flex; flex-direction: column; justify-content: flex-end; padding-bottom: 3px; }
.vthumb { width: 9px; height: 51.5%; border-radius: 5px; background: #8b8b8b; }

/* Browser sidebar */
.edge-side {
  display: flex;
  flex-direction: column;
  align-items: center;
  width: 44px;
  flex: none;
  padding: 12px 0 9px;
  gap: 23px;
}
.edge-side hr { width: 28px; height: 1px; margin: 0; border: 0; background: #bbb; }
.edge-side .push { margin-top: auto; margin-bottom: -9px; }

/* Taskbar */
.taskbar {
  display: grid;
  grid-template-columns: 1fr auto 1fr;
  align-items: center;
  height: 48px;
  flex: none;
  border-top: 1px solid #aeb6c2;
  background: linear-gradient(90deg, #e1edf7 20%, #d7ddf0 33%, #d5e2f8 38%, #d8dcee 48%, #d5e1f7 60%, #d9dff0 72%, #e0ebf7 85%);
  color: #222;
  font-family: "Open Sans", "Noto Sans", sans-serif;
  font-size: 12px;
}
.weather { display: flex; align-items: center; gap: 9px; padding-left: 19px; line-height: 16px; }
.sun { position: relative; padding-top: 4px; }
.badge {
  position: absolute;
  top: -5px;
  left: 11px;
  width: 16px;
  height: 16px;
  border-radius: 50%;
  background: #c42b1c;
  color: #fff;
  text-align: center;
}
.weather small { display: block; color: #555; font-size: 11px; }
.apps { display: flex; align-items: center; gap: 4px; }
.app {
  position: relative;
  display: flex;
  align-items: center;
  justify-content: center;
  width: 40px;
  height: 40px;
  padding: 0;
  border: 0;
  border-radius: 4px;
  background: none;
}
.app.current { background: #ebf0fa; }
.app.alert { background: #efe3ec; }
.run::after, .current::after, .alert::after {
  content: "";
  position: absolute;
  bottom: 1px;
  width: 6px;
  height: 3px;
  border-radius: 2px;
  background: #7b808a;
}
.current::after { width: 16px; background: #0078d4; }
.alert::after { background: #c42b1c; }
.search {
  display: flex;
  align-items: center;
  gap: 10px;
  width: 218px;
  height: 31px;
  margin: 0 2px;
  padding: 0 1px 0 11px;
  border: 1px solid #c8d2e4;
  border-radius: 16px;
  background: #f3f7fd;
}
.search input {
  flex: 1;
  min-width: 0;
  padding: 0;
  border: 0;
  background: none;
  font: 13px "Open Sans", "Noto Sans", sans-serif;
}
.search input::placeholder { color: #666; }
.case {
  display: flex;
  align-items: center;
  justify-content: center;
  width: 52px;
  height: 26px;
  border-radius: 13px;
  background: #e2e6eb;
}
.tray { display: flex; align-items: center; justify-content: flex-end; gap: 8px; padding-right: 21px; line-height: 16px; }
.chev { margin-right: 10px; }
.kb { margin-right: 9px; }
.lang { margin-right: 10px; text-align: center; }
.clock { margin-left: 8px; text-align: right; }
```
